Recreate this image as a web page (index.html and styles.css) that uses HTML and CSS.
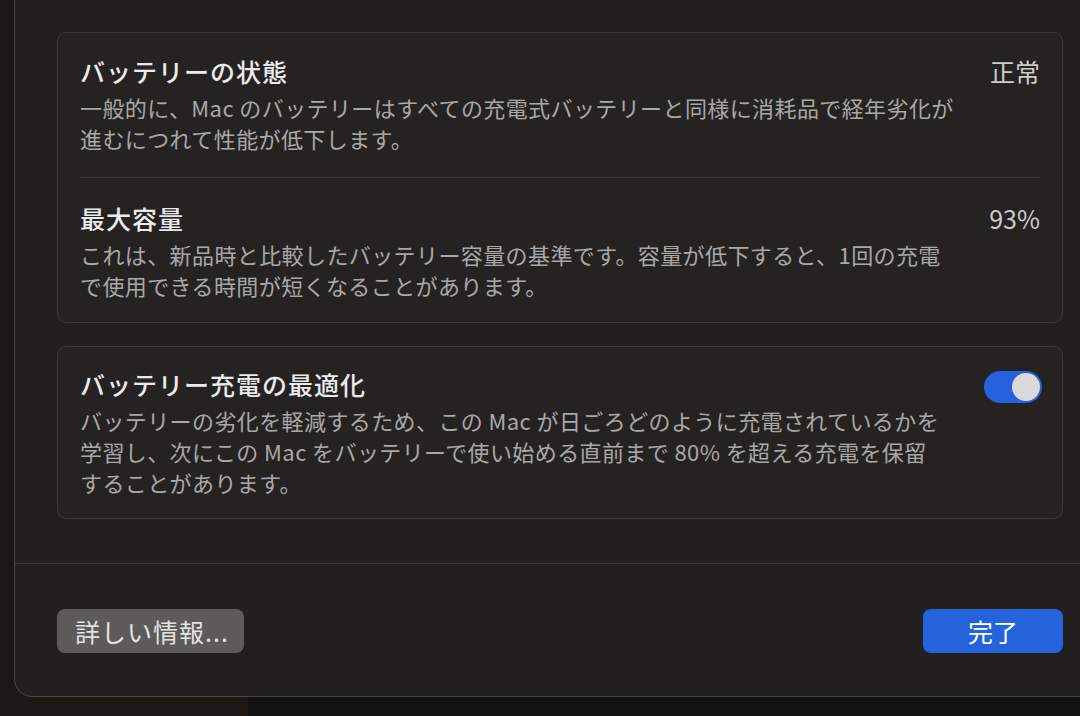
FILE: index.html
```html
<!DOCTYPE html>
<html lang="ja">
  <head>
    <meta charset="UTF-8" />
    <meta name="viewport" content="width=device-width, initial-scale=1.0" />
    <title>バッテリー</title>
    <link rel="stylesheet" href="styles.css">
  </head>
  <body>
    <div class="dialog">
      <div class="content">
        <div class="card">
          <div class="row row-first">
            <div class="text">
              <div class="title">バッテリーの状態</div>
              <div class="desc">一般的に、Mac のバッテリーはすべての充電式バッテリーと同様に消耗品で経年劣化が<br>進むにつれて性能が低下します。</div>
            </div>
            <div class="value">正常</div>
          </div>
          <div class="sep"></div>
          <div class="row row-second">
            <div class="text">
              <div class="title">最大容量</div>
              <div class="desc">これは、新品時と比較したバッテリー容量の基準です。容量が低下すると、1回の充電<br>で使用できる時間が短くなることがあります。</div>
            </div>
            <div class="value">93%</div>
          </div>
        </div>
        <div class="card card-opt">
          <div class="row">
            <div class="text">
              <div class="title">バッテリー充電の最適化</div>
              <div class="desc">バッテリーの劣化を軽減するため、この Mac が日ごろどのように充電されているかを<br>学習し、次にこの Mac をバッテリーで使い始める直前まで 80% を超える充電を保留<br>することがあります。</div>
            </div>
            <div class="toggle"><span class="knob"></span></div>
          </div>
        </div>
      </div>
      <div class="footer">
        <a href="javascript:;" class="btn btn-gray">詳しい情報...</a>
        <a href="javascript:;" class="btn btn-blue">完了</a>
      </div>
    </div>
  </body>
</html>
```

FILE: styles.css
```css
* {
  margin: 0;
  padding: 0;
  box-sizing: border-box;
}
html,
body {
  width: 1080px;
  height: 716px;
  overflow: hidden;
}
body {
  background: linear-gradient(to right, #1c1816 248px, #131212 248px);
  font-family: "Noto Sans CJK JP", "Noto Sans", sans-serif;
}
.dialog {
  margin: -20px 0 0 14px;
  width: 1092px;
  height: 717px;
  background-color: #211f1f;
  border: 1px solid #4a4846;
  border-radius: 18px;
  display: flex;
  flex-direction: column;
}
.content {
  padding: 51px 42px 0;
  display: flex;
  flex-direction: column;
  gap: 23px;
}
.card {
  background-color: #252322;
  border: 1px solid #3a3837;
  border-radius: 9px;
}
.row {
  display: flex;
  align-items: flex-start;
  padding: 21px 22px 20px;
}
.row-first {
  padding: 22px 22px 23px;
}
.row-second {
  padding: 24px 22px 21px;
}
.text {
  flex: 1;
}
.title {
  font-size: 25px;
  font-weight: 500;
  line-height: 32px;
  letter-spacing: 1px;
  color: #ebebeb;
  margin-bottom: 5px;
}
.desc {
  font-size: 22px;
  line-height: 31px;
  letter-spacing: 0.4px;
  color: #a8a8a8;
  white-space: nowrap;
}
.value {
  font-size: 25px;
  line-height: 32px;
  color: #cdcdcd;
}
.sep {
  height: 1px;
  margin: 0 22px;
  background-color: #363433;
}
.toggle {
  width: 58px;
  height: 32px;
  margin: 3px -2px 0 0;
  border-radius: 16px;
  background-color: #2463dd;
  display: flex;
  justify-content: flex-end;
  align-items: center;
  padding: 0 2px;
}
.knob {
  width: 28px;
  height: 28px;
  border-radius: 50%;
  background-color: #dadada;
}
.footer {
  margin-top: 44px;
  border-top: 1px solid #3e3c3b;
  padding: 45px 42px 0;
  display: flex;
  justify-content: space-between;
}
.btn {
  height: 44px;
  border-radius: 8px;
  font-size: 25px;
  line-height: 44px;
  text-decoration: none;
  display: block;
}
.btn-gray {
  width: 187px;
  padding-left: 18px;
  letter-spacing: 1px;
  background-color: #5c5b5a;
  color: #e4e4e4;
}
.btn-blue {
  width: 140px;
  text-align: center;
  background-color: #2563dc;
  color: #ffffff;
}
```
